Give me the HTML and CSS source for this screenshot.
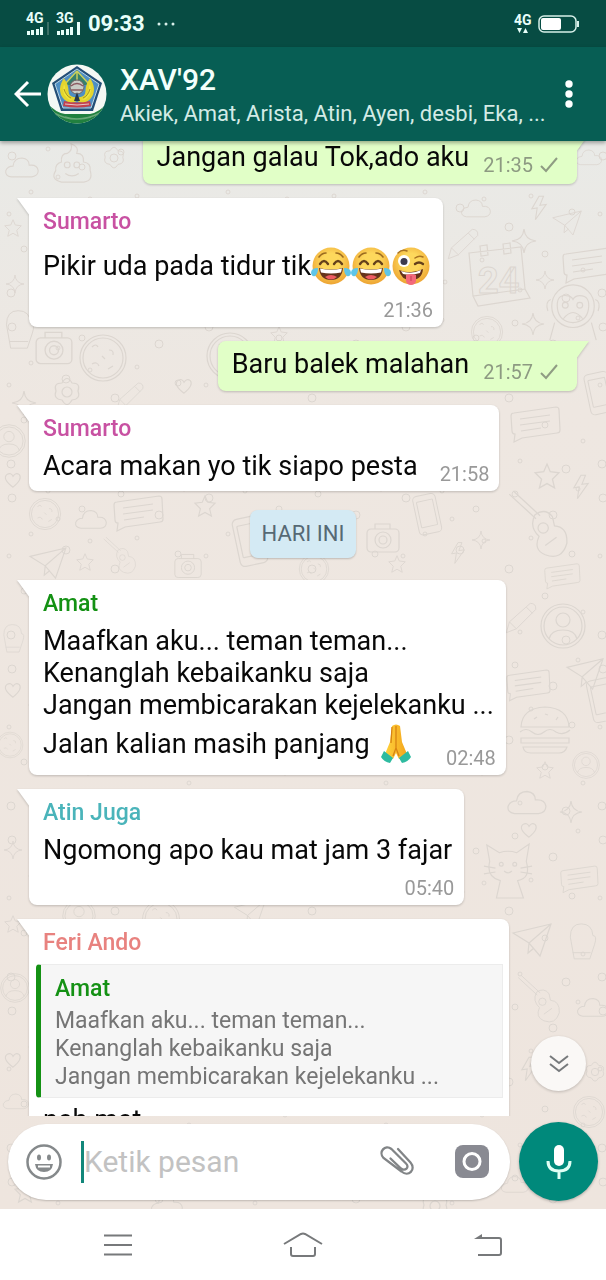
FILE: index.html
```html
<!DOCTYPE html>
<html lang="id">
<head>
<meta charset="utf-8">
<meta name="viewport" content="width=device-width, initial-scale=1">
<title>XAV'92</title>
<link rel="stylesheet" href="styles.css">
</head>
<body>
<svg class="defs" aria-hidden="true">
  <defs>
    <radialGradient id="face" cx=".5" cy=".4" r=".6"><stop offset=".4" stop-color="#fdd85c"/><stop offset="1" stop-color="#eda433"/></radialGradient>
    <linearGradient id="hand" x1="0" x2="1" y1="0" y2="0"><stop offset="0" stop-color="#ffd23c"/><stop offset="1" stop-color="#f3a51c"/></linearGradient>
    <symbol id="joy" viewBox="0 0 40 40">
      <circle cx="20" cy="20" r="18.500" fill="url(#face)"/>
      <path d="M8 11q3-4 7-4M25 7q4 0 7 4" fill="none" stroke="#9a6a20" stroke-width="1.600" stroke-linecap="round"/>
      <path d="M9 18q4-6 8 0M23 18q4-6 8 0" fill="none" stroke="#65401b" stroke-width="2.400" stroke-linecap="round"/>
      <path d="M8 22q12 3 24 0-1 12-12 12T8 22z" fill="#65331b"/>
      <path d="M9 22.500q11 2.500 22 0l-1 4q-10 2-20 0z" fill="#fff"/>
      <path d="M14 31q6-4 12 0-6 5-12 0z" fill="#ee5c62"/>
      <path d="M7 22q-7 0-7 5 1 4 4 3 3-2 3-8zM33 22q7 0 7 5-1 4-4 3-3-2-3-8z" fill="#5fc5e8"/>
    </symbol>
    <symbol id="wink" viewBox="0 0 40 40">
      <circle cx="20" cy="20" r="18.500" fill="url(#face)"/>
      <circle cx="13" cy="15" r="6" fill="#fff"/><circle cx="13" cy="15.500" r="3.500" fill="#3d3b4e"/>
      <path d="M7 7q4-4 9-2M24 12q4-3 8-1" fill="none" stroke="#a87322" stroke-width="1.500" stroke-linecap="round"/>
      <path d="M24 18q4-3 8 0" fill="none" stroke="#65401b" stroke-width="2.400" stroke-linecap="round"/>
      <path d="M8 24q12 5 24-1-1 11-12 11Q10 34 8 24z" fill="#65331b"/>
      <path d="M10 25q10 4 20-1l-1 3q-9 3-17 1z" fill="#fff"/>
      <path d="M15 29q5-2 10 0v6q-1 4-5 4t-5-4z" fill="#f3697b"/><path d="M20 30v5" stroke="#c73e56"/>
    </symbol>
    <symbol id="pray" viewBox="0 0 32 40">
      <path d="M12 2q4-3 8 0l2 16 5 12-8 5-3-6-3 6-8-5 5-12z" fill="url(#hand)"/>
      <path d="M16 2v22l-3 8M16 24l3 8M12 3l-1 16" fill="none" stroke="#d88413" stroke-width="1.300"/>
      <path d="M4 27l9 7-3 5q-6-1-9-6zM28 27l-9 7 3 5q6-1 9-6z" fill="#2ebba0"/>
    </symbol>
    <symbol id="tick" viewBox="0 0 20 18"><path d="M2 10l5 5L18 2" fill="none" stroke="#8f9c83" stroke-width="2"/></symbol>

    <symbol id="d-cloud" viewBox="0 0 40 30" overflow="visible"><path d="M8 26q-7-1-6-7 2-5 8-5 1-9 10-9 8 1 8 8 9-1 10 6 0 6-7 7z"/></symbol>
    <symbol id="d-star" viewBox="0 0 24 24" overflow="visible"><path d="M12 1l3 7 8 1-6 6 2 8-7-4-7 4 2-8-6-6 8-1z"/></symbol>
    <symbol id="d-spark" viewBox="0 0 24 24" overflow="visible"><path d="M12 0q1 11 12 12-11 1-12 12-1-11-12-12Q11 11 12 0z"/></symbol>
    <symbol id="d-flower" viewBox="0 0 30 30" overflow="visible"><circle cx="15" cy="15" r="5"/><path d="M10 6q5-9 10 0 9 0 6 8 3 8-6 9-5 9-10 0-9-1-6-9-3-8 6-8z"/></symbol>
    <symbol id="d-heart" viewBox="0 0 20 20" overflow="visible"><path d="M10 18Q-2 9 3 4q5-3 7 2 3-5 7-2 4 5-7 14z"/></symbol>
    <symbol id="d-poo" viewBox="0 0 46 46" overflow="visible"><path d="M22 3q9 3 6 10 8 0 7 9 8 1 7 9 4 12-10 12H12Q0 40 6 31q-1-7 6-9-1-9 6-9 6-3 4-10z"/><circle cx="18" cy="25" r="3"/><circle cx="28" cy="25" r="3"/><path d="M16 34q7 5 14 0"/></symbol>
    <symbol id="d-cal" viewBox="0 0 66 70" overflow="visible"><path d="M3 10l52-6 4 42-52 7zM7 53l5 10 52-8-5-9M14 3l7-1 1 10-7 1zM37 1l7-1 1 10-7 1z"/></symbol>
    <symbol id="d-monkey" viewBox="0 0 54 60" overflow="visible"><circle cx="27" cy="24" r="22"/><path d="M11 27q-2-15 9-14 5 0 7 4 2-4 7-4 11 0 9 14-2 13-16 14-14-1-16-14zM4 17q-6 2-3 12M50 17q6 2 3 12M8 41l-5 18M46 41l5 18"/><circle cx="19" cy="23" r="3"/><circle cx="34" cy="23" r="3"/><path d="M17 37q10-13 20 0"/></symbol>
    <symbol id="d-msg" viewBox="0 0 50 36" overflow="visible"><path d="M4 7l42-6q3 0 3 3l1 20q0 3-3 3L12 32l-8 4 1-8q-3 0-3-3L1 10q0-3 3-3zM10 13l30-4M10 19l30-4M11 25l20-3"/></symbol>
    <symbol id="d-person" viewBox="0 0 46 46" overflow="visible"><circle cx="23" cy="23" r="22"/><circle cx="23" cy="23" r="19"/><circle cx="23" cy="17" r="7"/><path d="M9 36q2-9 14-9t14 9"/></symbol>
    <symbol id="d-burger" viewBox="0 0 54 50" overflow="visible"><path d="M3 22Q4 3 27 2q23 1 24 20zM2 27q6-5 12 0 6 5 12 0t12 0q7 4 14-2M3 33h48v5H3zM5 42h44q-2 6-8 6H13q-7 0-8-6zM16 14l3-2M27 9l3 1M38 15l2-3"/></symbol>
    <symbol id="d-cam" viewBox="0 0 34 30" overflow="visible"><rect x="1" y="6" width="32" height="23" rx="4"/><circle cx="17" cy="17" r="8"/><circle cx="17" cy="17" r="4"/><path d="M9 6V1h15v5"/></symbol>
    <symbol id="d-phone" viewBox="0 0 34 54" overflow="visible"><rect x="2" y="2" width="28" height="48" rx="5" transform="rotate(-12 16 26)"/><rect x="6" y="9" width="20" height="32" rx="1" transform="rotate(-12 16 26)"/></symbol>
    <symbol id="d-cookie" viewBox="0 0 50 50" overflow="visible"><circle cx="25" cy="25" r="23"/><circle cx="25" cy="25" r="20"/><path d="M14 14q4-4 6 0M31 17q5 0 4 5M14 31q5-3 7 2M30 36l5-3M24 23l3 3"/></symbol>
    <symbol id="d-pencil" viewBox="0 0 44 44" overflow="visible"><path d="M3 41l4-14L34 3q8 0 7 8L16 36zM7 27l9 9M29 8l8 8"/></symbol>
    <symbol id="d-bolt" viewBox="0 0 20 28" overflow="visible"><path d="M10 1L2 15l6-1-2 13L18 10l-7 1 4-10z"/></symbol>
    <symbol id="d-plane" viewBox="0 0 40 34" overflow="visible"><path d="M1 10L39 1 28 33 17 20zM39 1L17 20l-1 10 6-5"/></symbol>
    <symbol id="d-guitar" viewBox="0 0 60 70" overflow="visible"><path d="M3 3l26 24M7 0l26 24M28 23q10-7 17 2l2 9q13 1 12 17-5 17-21 11-12-5-6-18-10-9-4-21z"/><circle cx="36" cy="36" r="5"/><path d="M38 53l11-8"/></symbol>
    <symbol id="d-mitt" viewBox="0 0 36 50" overflow="visible"><path d="M8 48L3 20Q3 3 17 3t15 15q6 0 2 12l-6 18zM6 40l23 0"/></symbol>
    <symbol id="d-cat" viewBox="0 0 54 60" overflow="visible"><path d="M8 20L5 3l13 8q9-3 18 0L49 2l-3 18q5 18-9 20l6 18H15l4-18Q4 36 8 20z"/><circle cx="20" cy="23" r="2"/><circle cx="34" cy="23" r="2"/><path d="M23 30q4 4 8 0M2 25l12 2M2 33l12-2M52 25l-12 2M52 33l-12-2"/></symbol>
    <pattern id="specks" width="197" height="171" patternUnits="userSpaceOnUse">
      <g fill="none" stroke="#dcd6d0"><circle cx="12" cy="15" r="4"/><circle cx="48" cy="8" r="2"/><circle cx="82" cy="26" r="3"/><circle cx="31" cy="51" r="2"/><circle cx="66" cy="67" r="4"/><circle cx="9" cy="73" r="2"/><circle cx="90" cy="58" r="2"/><circle cx="58" cy="36" r="2"/><circle cx="121" cy="11" r="3"/><circle cx="159" cy="32" r="4"/><circle cx="184" cy="6" r="2"/><circle cx="137" cy="55" r="2"/><circle cx="178" cy="71" r="3"/><circle cx="115" cy="86" r="4"/><circle cx="24" cy="108" r="3"/><circle cx="51" cy="141" r="2"/><circle cx="88" cy="119" r="2"/><circle cx="151" cy="113" r="3"/><circle cx="189" cy="129" r="2"/><circle cx="126" cy="149" r="2"/><circle cx="11" cy="152" r="4"/><circle cx="172" cy="157" r="4"/></g>
    </pattern>
  </defs>
</svg>

<div class="phone">
  <div class="statusbar">
    <div class="status-left">
      <span class="signal"><b>4G</b><svg width="24" height="10" viewBox="0 0 24 10"><path fill="#e8fffa" d="M1 6h3v4H1zM5 5h3v5H5zM10 4h3v6h-3zM14 2h3v8h-3z"/><path fill="#3c7168" d="M21 -3h2v13h-2z"/></svg></span>
      <span class="signal"><b>3G</b><svg width="24" height="10" viewBox="0 0 24 10"><path fill="#e8fffa" d="M1 6h3v4H1zM5 5h3v5H5zM10 4h3v6h-3zM14 2h3v8h-3zM21 -3h3v13h-3z"/></svg></span>
      <time class="clock">09:33</time>
      <svg width="18" height="4" viewBox="0 0 18 4" fill="#d8efea"><circle cx="2" cy="2" r="1.500"/><circle cx="9" cy="2" r="1.500"/><circle cx="16" cy="2" r="1.500"/></svg>
    </div>
    <div class="status-right">
      <span class="signal"><b>4G</b><svg width="18" height="7" viewBox="0 0 18 7" fill="#e8fffa"><path d="M3 1h5L5.500 6zM9 6h5l-2.500-5z"/></svg></span>
      <svg width="42" height="18" viewBox="0 0 42 18"><rect x="1" y="1" width="37" height="16" rx="5" fill="none" stroke="#d7efe9" stroke-width="1.500"/><rect x="3" y="3" width="20" height="12" rx="2" fill="#fff"/><path d="M40 6v6" stroke="#d7efe9" stroke-width="2"/></svg>
    </div>
  </div>

  <header class="topbar">
    <button class="icon-btn back" aria-label="Kembali"><svg width="28" height="28" viewBox="0 0 28 28"><path d="M27 14H3M14 2L2 14l12 12" fill="none" stroke="#fff" stroke-width="3"/></svg></button>
    <svg class="avatar" viewBox="0 0 60 60" role="img" aria-label="Foto grup">
      <defs><clipPath id="round"><circle cx="30" cy="30" r="29.500"/></clipPath></defs>
      <g clip-path="url(#round)">
        <rect width="60" height="60" fill="#f4f8f4"/>
        <path d="M0 39q9 10 18 11h25q10-2 17-11v21H0z" fill="#21803f"/>
        <path d="M7 49q22 12 46 0M18 53q12 4 26 0" stroke="#6aa878" stroke-width="1.500" fill="none"/>
        <path d="M30 2l25 17-9 28H14L5 19z" fill="#244f77"/>
        <path d="M30 5l22 15-8 24H16L8 20z" fill="#4e8fc4" stroke="#b9d5e4"/>
        <path d="M30 6l-13 15h26z" fill="#37806c"/>
        <path d="M30 7l-11 12M30 7l11 12M30 7v9" stroke="#c9cf5c" stroke-width="1.500"/>
        <path d="M17 17c-4 7-3 14 2 18 3 3 7 3 11 0-6 0-10-3-10-8 0-4-1-7-3-10zM43 17c4 7 3 14-2 18-3 3-7 3-11 0 6 0 10-3 10-8 0-4 1-7 3-10z" fill="#f0e63e" stroke="#e4d52e" stroke-width="3"/>
        <path d="M17 25q2 7 7 9M43 25q-2 7-7 9" fill="none" stroke="#a89523"/>
        <circle cx="30" cy="23" r="7" fill="#c9cdc6" stroke="#6b6262"/>
        <path d="M24 22q6-5 12 0M24 26h12" stroke="#8b5960" stroke-width="1.500" fill="none"/>
        <path d="M30 28l-3 9h6z" fill="#28394b"/>
        <path d="M17 37q13 3 26 0l1 5q-14 3-28 0z" fill="#c4424d"/><path d="M18 40q12 2 24 0" stroke="#e5c6cb" fill="none"/>
      </g>
    </svg>
    <div class="heading">
      <h1>XAV'92</h1>
      <p>Akiek, Amat, Arista, Atin, Ayen, desbi, Eka, ...</p>
    </div>
    <button class="icon-btn more" aria-label="Opsi lainnya"><svg width="8" height="28" viewBox="0 0 8 28" fill="#fff"><circle cx="4" cy="4" r="3.700"/><circle cx="4" cy="14" r="3.700"/><circle cx="4" cy="24" r="3.700"/></svg></button>
  </header>

  <main class="chat">
    <svg class="wallpaper" viewBox="0 0 606 1068" preserveAspectRatio="xMidYMin slice" aria-hidden="true">
      <rect width="606" height="1068" fill="url(#specks)"/>
      <g fill="none" stroke="#dcd6d0" stroke-width="1.200">
        <use href="#d-cloud" x="4" y="12" width="36" height="28"/><use href="#d-poo" x="50" y="0" width="44" height="44"/><use href="#d-flower" x="102" y="5" width="24" height="24"/>
        <use href="#d-star" x="4" y="78" width="18" height="18"/><use href="#d-spark" x="6" y="134" width="18" height="18"/><use href="#d-mitt" x="4" y="166" width="30" height="44"/>
        <use href="#d-cookie" x="78" y="192" width="50" height="50"/><use href="#d-cam" x="35" y="190" width="38" height="34"/><use href="#d-cookie" x="205" y="190" width="50" height="50"/><use href="#d-star" x="270" y="185" width="18" height="18"/>
        <use href="#d-heart" x="175" y="236" width="18" height="18"/><use href="#d-pencil" x="112" y="240" width="36" height="30"/><use href="#d-spark" x="12" y="250" width="24" height="24"/><use href="#d-flower" x="50" y="236" width="34" height="30"/>
        <use href="#d-cloud" x="460" y="54" width="32" height="26"/><use href="#d-bolt" x="530" y="54" width="18" height="26"/><use href="#d-plane" x="552" y="68" width="30" height="28"/><use href="#d-cloud" x="575" y="4" width="28" height="24"/>
        <use href="#d-spark" x="512" y="88" width="24" height="24"/><use href="#d-pencil" x="446" y="86" width="34" height="34"/><use href="#d-cal" x="466" y="102" width="66" height="70"/><use href="#d-msg" x="562" y="106" width="50" height="36"/>
        <use href="#d-monkey" x="546" y="142" width="54" height="58"/><use href="#d-spark" x="522" y="172" width="22" height="22"/><use href="#d-cookie" x="470" y="174" width="34" height="34"/><use href="#d-spark" x="536" y="130" width="18" height="18"/>
        <use href="#d-phone" x="585" y="230" width="30" height="46"/><use href="#d-msg" x="510" y="262" width="50" height="42"/><use href="#d-star" x="534" y="322" width="26" height="26"/><use href="#d-bolt" x="572" y="332" width="18" height="28"/>
        <use href="#d-guitar" x="506" y="350" width="62" height="72"/><use href="#d-person" x="-8" y="280" width="34" height="40"/><use href="#d-heart" x="4" y="330" width="18" height="18"/>
        <use href="#d-cookie" x="28" y="356" width="34" height="34"/><use href="#d-cloud" x="74" y="362" width="34" height="32"/><use href="#d-msg" x="112" y="354" width="52" height="36"/><use href="#d-star" x="194" y="354" width="22" height="22"/><use href="#d-phone" x="234" y="374" width="34" height="54"/>
        <use href="#d-cam" x="366" y="382" width="34" height="30"/><use href="#d-phone" x="414" y="352" width="28" height="44"/><use href="#d-star" x="388" y="414" width="18" height="18"/><use href="#d-spark" x="472" y="390" width="18" height="18"/><use href="#d-msg" x="544" y="420" width="36" height="30"/>
        <use href="#d-plane" x="26" y="406" width="44" height="32"/><use href="#d-guitar" x="102" y="394" width="34" height="44"/><use href="#d-star" x="76" y="412" width="18" height="18"/><use href="#d-cookie" x="292" y="412" width="44" height="32"/><use href="#d-cam" x="174" y="412" width="28" height="26"/><use href="#d-bolt" x="450" y="400" width="16" height="24"/>
        <use href="#d-pencil" x="504" y="460" width="34" height="34"/><use href="#d-person" x="540" y="462" width="46" height="46"/><use href="#d-msg" x="506" y="526" width="44" height="36"/><use href="#d-plane" x="566" y="516" width="38" height="34"/><use href="#d-burger" x="518" y="564" width="54" height="50"/><use href="#d-phone" x="588" y="530" width="30" height="60"/>
        <use href="#d-star" x="536" y="620" width="18" height="18"/><use href="#d-person" x="572" y="610" width="28" height="28"/><use href="#d-cloud" x="506" y="644" width="42" height="34"/><use href="#d-cat" x="482" y="700" width="52" height="60"/><use href="#d-msg" x="560" y="718" width="38" height="40"/><use href="#d-spark" x="560" y="660" width="22" height="22"/>
        <use href="#d-plane" x="512" y="782" width="40" height="34"/><use href="#d-mitt" x="568" y="780" width="28" height="40"/><use href="#d-guitar" x="516" y="832" width="44" height="56"/><use href="#d-cloud" x="576" y="850" width="34" height="32"/><use href="#d-heart" x="520" y="680" width="18" height="18"/>
        <use href="#d-bolt" x="520" y="914" width="18" height="28"/><use href="#d-flower" x="584" y="920" width="22" height="22"/><use href="#d-cookie" x="572" y="954" width="34" height="34"/><use href="#d-person" x="0" y="832" width="30" height="30"/><use href="#d-star" x="4" y="774" width="18" height="18"/>
        <use href="#d-mitt" x="2" y="480" width="22" height="34"/><use href="#d-heart" x="4" y="540" width="18" height="18"/><use href="#d-cookie" x="-4" y="590" width="28" height="28"/><use href="#d-spark" x="4" y="700" width="18" height="18"/><use href="#d-heart" x="4" y="910" width="18" height="18"/><use href="#d-cloud" x="2" y="948" width="28" height="24"/>
        <use href="#d-person" x="62" y="758" width="34" height="34"/><use href="#d-cookie" x="138" y="758" width="46" height="40"/><use href="#d-plane" x="230" y="758" width="40" height="28"/><use href="#d-star" x="14" y="1040" width="22" height="22"/><use href="#d-cloud" x="150" y="1050" width="34" height="26"/><use href="#d-flower" x="420" y="1050" width="30" height="30"/><use href="#d-cloud" x="500" y="1030" width="30" height="26"/>
      </g>
      <text class="doodle-number" x="478" y="152">24</text>
    </svg>

    <div class="messages">
      <article class="bubble out">
        <div class="last"><span class="text">Jangan galau Tok,ado aku</span><span class="meta"><time>21:35</time><svg width="20" height="18"><use href="#tick"/></svg></span></div>
      </article>
      <article class="bubble in">
        <h2 class="magenta">Sumarto</h2>
        <div class="text with-emoji">Pikir uda pada tidur tik<svg class="emoji" role="img" aria-label="tertawa"><use href="#joy"/></svg><svg class="emoji" role="img" aria-label="tertawa"><use href="#joy"/></svg><svg class="emoji" role="img" aria-label="mengedip"><use href="#wink"/></svg></div>
        <time class="below">21:36</time>
      </article>
      <article class="bubble out tail">
        <div class="last"><span class="text">Baru balek malahan</span><span class="meta"><time>21:57</time><svg width="20" height="18"><use href="#tick"/></svg></span></div>
      </article>
      <article class="bubble in">
        <h2 class="magenta">Sumarto</h2>
        <div class="last"><span class="text">Acara makan yo tik siapo pesta</span><time>21:58</time></div>
      </article>
      <div class="day">HARI INI</div>
      <article class="bubble in">
        <h2 class="green">Amat</h2>
        <div class="text lines">Maafkan aku... teman teman...<br>Kenanglah kebaikanku saja<br>Jangan membicarakan kejelekanku ...</div>
        <div class="last"><span class="text with-emoji">Jalan kalian masih panjang&nbsp;<svg class="emoji" role="img" aria-label="terima kasih"><use href="#pray"/></svg></span><time>02:48</time></div>
      </article>
      <article class="bubble in">
        <h2 class="teal">Atin Juga</h2>
        <div class="text">Ngomong apo kau mat jam 3 fajar</div>
        <time class="below">05:40</time>
      </article>
      <article class="bubble in">
        <h2 class="coral">Feri Ando</h2>
        <blockquote>
          <h3 class="green">Amat</h3>
          <p>Maafkan aku... teman teman...<br>Kenanglah kebaikanku saja<br>Jangan membicarakan kejelekanku ...</p>
        </blockquote>
        <div class="text">nah mat</div>
      </article>
    </div>
    <button class="jump" aria-label="Ke pesan terbaru"><svg width="20" height="18" viewBox="0 0 20 18"><path d="M1 1l9 7 9-7M1 9l9 7 9-7" fill="none" stroke="#777a7c" stroke-width="2"/></svg></button>

    <form class="composer">
      <div class="pill">
        <button type="button" class="icon-btn" aria-label="Emoji"><svg width="36" height="36" viewBox="0 0 36 36"><circle cx="18" cy="18" r="16.500" fill="none" stroke="#85898b" stroke-width="2.500"/><ellipse cx="13" cy="13.500" rx="2" ry="3" fill="#85898b"/><ellipse cx="23" cy="13.500" rx="2" ry="3" fill="#85898b"/><path d="M9 20h18q-1 8-9 8t-9-8z" fill="#85898b"/><path d="M12 22.500h12" stroke="#fff" stroke-width="2"/></svg></button>
        <span class="caret"></span>
        <input type="text" placeholder="Ketik pesan" aria-label="Ketik pesan">
        <button type="button" class="icon-btn" aria-label="Lampirkan"><svg width="36" height="34" viewBox="0 0 36 34"><path d="M19 4l12.500 13.500c6 7-2 15-9 9L4.500 13C-1 7 6 -1 12.500 4L27 18.500c4 4-1 8-5 5L11.500 13.500" fill="none" stroke="#828587" stroke-width="2.300" stroke-linecap="round"/></svg></button>
        <button type="button" class="icon-btn camera" aria-label="Kamera"><svg width="34" height="34" viewBox="0 0 34 34"><rect width="34" height="33" rx="8" fill="#898a92"/><circle cx="17" cy="16.500" r="8" fill="none" stroke="#fff" stroke-width="3"/></svg></button>
      </div>
      <button type="button" class="mic" aria-label="Pesan suara"><svg width="26" height="36" viewBox="0 0 26 36"><rect x="8" y="1" width="10" height="21" rx="5" fill="#fff"/><path d="M2 17q0 10 11 10t11-10M13 27v8" fill="none" stroke="#e0fff5" stroke-width="3"/></svg></button>
    </form>
  </main>

  <nav class="navbar" aria-label="Navigasi sistem">
    <button class="icon-btn" aria-label="Terkini"><svg width="28" height="22" viewBox="0 0 28 22"><path d="M0 1.500h28M0 11h28M0 20.500h28" stroke="#77797b" stroke-width="2"/></svg></button>
    <button class="icon-btn" aria-label="Beranda"><svg width="40" height="26" viewBox="0 0 40 26"><path d="M1 12L18 2q2-1 4 0l17 10M8 15v7q0 2 2 2h20q2 0 2-2v-7" fill="none" stroke="#77797b" stroke-width="2"/></svg></button>
    <button class="icon-btn" aria-label="Kembali"><svg width="28" height="24" viewBox="0 0 28 24"><path d="M5 5h20q2 0 2 2v13q0 2-2 2H4" fill="none" stroke="#77797b" stroke-width="2"/><path d="M0 6l8-5v5z" fill="#77797b"/></svg></button>
  </nav>
</div>
</body>
</html>
```

FILE: styles.css
```css
* { box-sizing: border-box; }
body, h1, h2, h3, p, blockquote { margin: 0; }
body { font-family: Roboto, "Liberation Sans", sans-serif; background: #fff; }
svg { display: block; flex: none; }
button { font: inherit; border: 0; background: none; padding: 0; cursor: pointer; }
.defs { position: absolute; width: 0; height: 0; }

.phone { height: 100vh; display: flex; flex-direction: column; overflow: hidden; }

.statusbar {
  flex: none;
  height: 47px;
  padding: 0 26px;
  display: flex;
  align-items: center;
  justify-content: space-between;
  background: #074c43;
  color: #e8fffa;
}
.status-left, .status-right { display: flex; align-items: center; gap: 6px; }
.signal { display: flex; flex-direction: column; }
.signal svg { overflow: visible; }
.signal b { font-size: 14px; line-height: 13px; font-weight: 700; }
.clock { font-size: 22px; font-weight: 700; margin-left: 2px; }
.status-left > svg { margin-left: 6px; }

.topbar {
  flex: none;
  height: 94px;
  padding: 0 33px 0 14px;
  display: flex;
  align-items: center;
  background: #075e54;
  box-shadow: 0 2px 4px #0005;
  position: relative;
  z-index: 2;
}
.icon-btn { display: flex; align-items: center; justify-content: center; flex: none; }
.avatar { width: 60px; height: 60px; margin-left: 5px; }
.heading { flex: 1; min-width: 0; margin-left: 13px; padding-top: 4px; color: #f3fffc; }
.heading h1 { font-size: 30px; line-height: 36px; font-weight: 500; }
.heading p { font-size: 22px; line-height: 32px; color: #d3ebe6; white-space: nowrap; overflow: hidden; }

.chat {
  flex: 1;
  min-height: 0;
  display: flex;
  flex-direction: column;
  position: relative;
  overflow: hidden;
  background: linear-gradient(#e9eae7, #eee7e1 25%, #eee5de);
}
.wallpaper { position: absolute; inset: 0; width: 100%; height: 100%; }
.doodle-number { font-size: 36px; font-weight: 700; fill: none; stroke: #dcd6d0; }

.messages {
  flex: 1;
  min-height: 0;
  overflow: hidden;
  position: relative;
  display: flex;
  flex-direction: column;
  gap: 14px;
  padding: 0 29px;
}
.messages > * { flex: none; }
.messages > :first-child { margin-top: -7px; }
.bubble {
  position: relative;
  align-self: flex-start;
  padding: 9px 10px 7px 14px;
  border-radius: 8px;
  background: #fff;
  filter: drop-shadow(0 1px 1px #0003);
}
.bubble.in { border-top-left-radius: 0; }
.bubble.out { align-self: flex-end; padding: 7px 18px 9px 14px; background: #e1ffc7; border-top-right-radius: 0; }
.bubble::before {
  content: "";
  position: absolute;
  top: 0;
  width: 13px;
  height: 18px;
  background: inherit;
}
.in::before { left: -12px; clip-path: polygon(0 0, 100% 0, 100% 100%); }
.out::before { right: -12px; clip-path: polygon(0 0, 100% 0, 0 100%); }

h2 { font-size: 23px; line-height: 30px; font-weight: 500; margin-bottom: 6px; }
h3 { font-size: 23px; line-height: 30px; font-weight: 500; }
.magenta { color: #c851a2; }
.green { color: #149114; }
.teal { color: #4ab4ba; }
.coral { color: #e8827f; }

.text { display: block; font-size: 27px; line-height: 32px; color: #080808; padding: 0 2px 2px 0; white-space: nowrap; }
.text.lines { padding-bottom: 0; }
.with-emoji { display: flex; align-items: center; height: 47px; }
.emoji { width: 40px; height: 40px; }
.last { display: flex; align-items: flex-end; justify-content: space-between; gap: 20px; }
.out .last { gap: 12px; }
time { display: block; }
.bubble time { font-size: 20px; line-height: 20px; color: #999; }
.bubble .below { margin-top: 10px; text-align: right; }
.meta { display: flex; align-items: center; gap: 6px; }
.out .meta time { color: #8d9a82; }

.day {
  align-self: center;
  margin: 5px 0 8px;
  padding: 0 12px;
  font-size: 22px;
  line-height: 48px;
  color: #566974;
  background: #d4eaf4;
  border-radius: 8px;
  box-shadow: 0 1px 2px #0003;
}

blockquote {
  margin: 0 -4px 6px -7px;
  padding: 9px 63px 6px 14px;
  background: #f6f6f6;
  border: 1px solid #ececec;
  border-left: 5px solid #149114;
  border-radius: 4px 0 0 4px;
}
blockquote p { margin-top: 3px; font-size: 23px; line-height: 28px; color: #757575; }

.jump {
  position: absolute;
  right: 20px;
  bottom: 118px;
  width: 55px;
  height: 55px;
  border-radius: 50%;
  background: #faf8f6;
  box-shadow: 0 1px 3px #0003;
  display: flex;
  align-items: center;
  justify-content: center;
}

.composer { flex: none; position: relative; display: flex; align-items: center; gap: 9px; padding: 6px 8px 8px; }
.pill {
  flex: 1;
  min-width: 0;
  height: 76px;
  padding: 0 21px 0 18px;
  display: flex;
  align-items: center;
  background: #fff;
  border-radius: 38px;
  box-shadow: 0 1px 2px #0003;
}
.caret { width: 3px; height: 42px; margin-left: 19px; background: #12877a; }
.pill input {
  flex: 1;
  min-width: 0;
  border: 0;
  padding: 0;
  outline: 0;
  background: none;
  font: 30px/36px Roboto, "Liberation Sans", sans-serif;
}
.pill input::placeholder { color: #c2c2c2; opacity: 1; }
.camera { margin-left: 40px; }
.mic {
  width: 79px;
  height: 79px;
  flex: none;
  border-radius: 50%;
  background: #00897b;
  box-shadow: 0 1px 3px #0004;
  display: flex;
  align-items: center;
  justify-content: center;
}

.navbar { flex: none; height: 71px; display: flex; align-items: center; justify-content: space-between; padding: 0 104px; background: #fff; }
```
